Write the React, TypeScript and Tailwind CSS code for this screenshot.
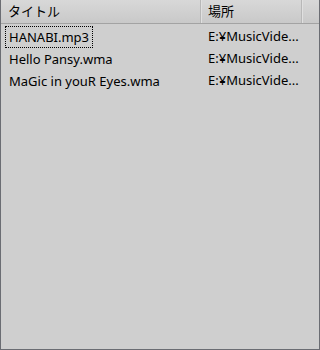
const rows = [
  { title: "HANABI.mp3", path: "E:¥MusicVide..." },
  { title: "Hello Pansy.wma", path: "E:¥MusicVide..." },
  { title: "MaGic in youR Eyes.wma", path: "E:¥MusicVide..." },
]

const font = { fontFamily: '"Noto Sans", "Noto Sans CJK JP", sans-serif' }

export default function App() {
  return (
    <div className="w-[320px] h-[350px] bg-[#cfcfcf] border-x border-b border-[#6b6d73] flex flex-col text-[13px] text-black" style={font}>
      {/* header */}
      <div className="flex h-[24px] border-b border-[#a3a3a3] bg-gradient-to-b from-[#d8d8d8] to-[#c9c9c9]">
        <div className="w-[200px] pl-[7px] flex items-center border-r border-[#b8b8b8]">タイトル</div>
        <div className="w-[101px] pl-[6px] flex items-center border-l border-[#e0e0e0] border-r border-r-[#b8b8b8]">場所</div>
        <div className="flex-1 border-l border-[#e0e0e0]"></div>
      </div>
      {/* rows */}
      <div className="flex flex-col pt-[2px]">
        {rows.map((r, i) => (
          <div key={i} className="flex h-[22px] items-center">
            <div className="w-[201px] pl-[4px] flex">
              <span className={"px-[3px] leading-[20px] border " + (i === 0 ? "border-dotted border-black" : "border-transparent")}>
                {r.title}
              </span>
            </div>
            <div className="pl-[6px] whitespace-nowrap">{r.path}</div>
          </div>
        ))}
      </div>
    </div>
  )
}
